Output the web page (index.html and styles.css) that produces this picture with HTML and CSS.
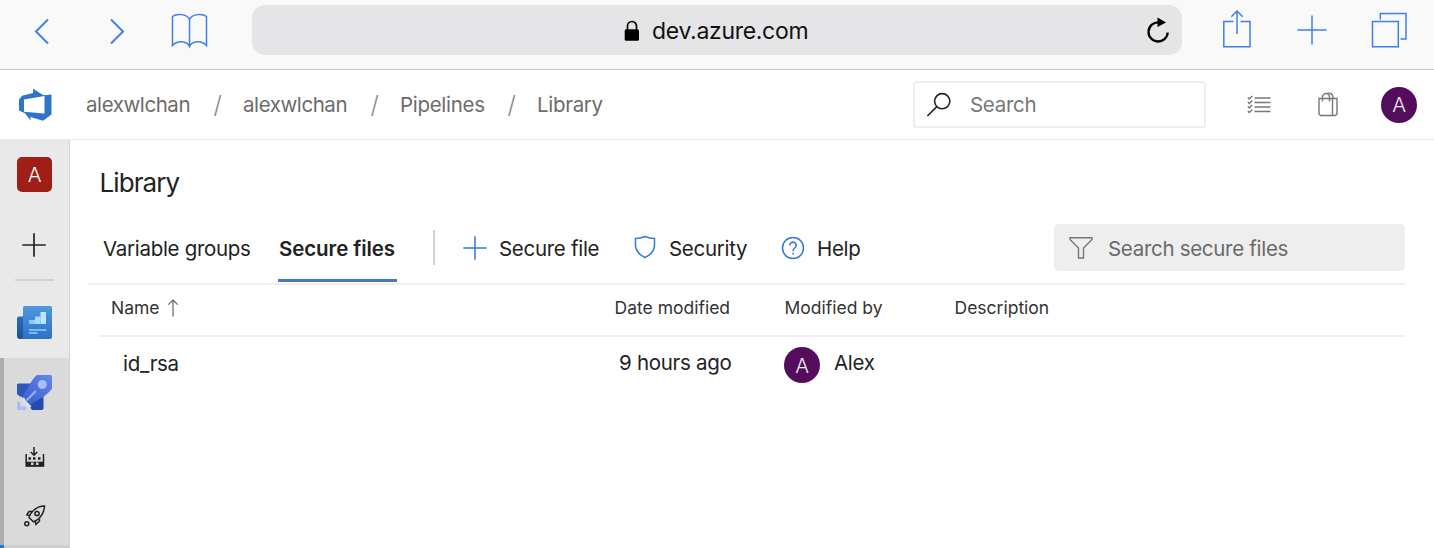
FILE: index.html
```html
<!DOCTYPE html>
<html lang="en">
<head>
<meta charset="utf-8">
<title>Library - Pipelines</title>
<link rel="stylesheet" href="styles.css">
</head>
<body>
<div class="browser">
  <svg class="nav-back" width="16" height="28" viewBox="0 0 16 28"><path d="M14 2.500 2 14.500 14 26.500" /></svg>
  <svg class="nav-forward" width="16" height="28" viewBox="0 0 16 28"><path d="M2 2.500 14 14.500 2 26.500" /></svg>
  <svg class="nav-book" width="38" height="38" viewBox="0 0 38 38"><path d="M18.500 7.500C16 1.500 5 1.500 1.500 4.500V33.500C6 28 16 28.500 18.500 34.500 21 28.500 31 28 35.500 33.500V4.500C32 1.500 21 1.500 18.500 7.500V35.500" /></svg>
  <div class="address">
    <svg class="lock" width="16" height="22" viewBox="0 0 16 22"><path d="M3.500 10V6a4.500 4.500 0 0 1 9 0v4" fill="none" stroke="#000" stroke-width="1.700"/><rect x=".7" y="9.300" width="14.300" height="11.500" rx="1.500"/></svg>
    <span class="url">dev.azure.com</span>
    <svg class="reload" width="24" height="28" viewBox="0 0 24 28"><path d="M12.500 5.300a9.600 9.600 0 1 0 9.200 10.200" fill="none" stroke="#000" stroke-width="2.300"/><path d="M11.500 .5 20 5.500 11.500 10z"/></svg>
  </div>
  <svg class="nav-share" width="30" height="40" viewBox="0 0 30 40"><path d="M11.500 13.500H1.800V38.800H28V13.500H18.500M15 26V3M9.300 8.700 15 3l5.700 5.700" /></svg>
  <svg class="nav-add" width="30" height="30" viewBox="0 0 30 30"><path d="M15 .5v29M.5 15h29" /></svg>
  <svg class="nav-tabs" width="36" height="36" viewBox="0 0 36 36"><path d="M1.500 9.500h25.800v25.200H1.500zM9.300 7.500V1.500H35V27h-5.500" /></svg>
</div>

<header class="header">
  <svg class="logo" width="34" height="34" viewBox="0 0 34 34"><path fill="#2f74cc" fill-rule="evenodd" d="M1 11.500 4 7.800 15 5V.8L25.500 7.300 33.500 6.500V26.500L25 32.800 12.500 29V32.500L7 25.300 1 22.500zM6 11.500V23.800L26.500 25.500V8z"/></svg>
  <nav class="crumbs">
    <span class="crumb crumb-org">alexwlchan</span><span class="slash">/</span>
    <span class="crumb crumb-project">alexwlchan</span><span class="slash">/</span>
    <span class="crumb crumb-area">Pipelines</span><span class="slash">/</span>
    <span class="crumb crumb-page">Library</span>
  </nav>
  <div class="search">
    <svg width="26" height="26" viewBox="0 0 26 26"><g fill="none" stroke="#222" stroke-width="1.600"><circle cx="16.200" cy="9.200" r="7.600"/><path d="M10.800 14.600 1.400 24"/></g></svg>
    <span class="search-text">Search</span>
  </div>
  <svg class="tasks" width="24" height="20" viewBox="0 0 24 20"><g fill="none" stroke="#777" stroke-width="1.500"><path d="M7.500 3h16M7.500 7.500h16M7.500 12h16M7.500 16.500h16"/><path stroke-width="1.300" d="m.8 2.500 1.500 1.500L5.300 1M.8 7l1.500 1.500 3-3M.8 11.500 2.300 13l3-3M.8 16l1.500 1.500 3-3"/></g></svg>
  <svg class="bag" width="20" height="25" viewBox="0 0 20 25"><g fill="none" stroke="#777" stroke-width="1.400"><path d="M1 6.500h18v15.500l-1.500 1.500H2.500L1 22zM14.500 6.500v17M4.500 9.500V5a3.500 3.500 0 0 1 7 0v4.500M8.500 1.700Q10 1 11.500 1.200 15 1.500 15.200 6.500"/></g></svg>
  <span class="avatar avatar-header">A</span>
</header>

<div class="body">
  <aside class="sidebar">
    <span class="tile">A</span>
    <svg class="side-add" width="24" height="24" viewBox="0 0 24 24"><path d="M12 .3v23.400M.3 12h23.400" stroke="#222" stroke-width="1.700"/></svg>
    <div class="side-rule"></div>
    <svg class="boards" width="36" height="34" viewBox="0 0 36 34">
      <defs>
        <linearGradient id="board" x2="0" y2="1"><stop stop-color="#4d99df"/><stop offset="1" stop-color="#2e70c9"/></linearGradient>
        <linearGradient id="fold" x2="0" y2="1"><stop stop-color="#2a6db8"/><stop offset="1" stop-color="#1e5093"/></linearGradient>
      </defs>
      <path fill="url(#fold)" d="M1.500 10.500H7V33H3a3 3 0 0 1-3-3V12z"/>
      <path fill="url(#board)" d="M7.500 0H33.500A1.500 1.500 0 0 1 35 1.500V31a2 2 0 0 1-2 2H4c1.500-.5 2-1.500 2-3V1.500A1.500 1.500 0 0 1 7.500 0z"/>
      <path fill="#8ccaf7" d="M12 14h6v4h-6z"/><path fill="#a6daff" d="M18 10.500h5.500V18H18z"/><path fill="#c1e7ff" d="M23.500 6H29v12h-5.500z"/>
      <path fill="#7cb8ef" d="M12 23h17.500v2H12zM12 26h8.500v2H12z"/>
    </svg>
    <div class="section">
      <svg class="pipelines" width="36" height="36" viewBox="0 0 36 36">
        <defs><linearGradient id="hull" x1="1" x2="0" y2="1"><stop stop-color="#6389e9"/><stop offset="1" stop-color="#365bcd"/></linearGradient></defs>
        <path fill="#3157bd" d="M0 10Q0 8.500 1.500 8.500H15L6 24 0 19z"/>
        <path fill="#2748b3" d="M12 28 26.500 19V33.500L25 35H15L12 31z"/>
        <path fill="url(#hull)" d="M20 0H33.500Q35 0 35 1.500V13.500Q33 17 26 22L12.500 30 5 22.500 13.500 8Q17 2 20 0z"/>
        <circle cx="25.300" cy="9.500" r="4.500" fill="#a7bef8"/>
        <path d="M9.500 25.500 19 15.800" stroke="#8ba8f2" stroke-width="2.500"/>
        <path d="M2.500 23 13 33" stroke="#dadada" stroke-width="4.500"/>
        <path fill="#a9bef5" d="M0 26.500H3.500V31.500H9V35H1.500Q0 35 0 33.500z"/>
        <path fill="#dce2f2" d="M5 24.500 7 22l2.500 5.500L12.500 30 10 31.500 8 27.500z"/>
      </svg>
      <svg class="builds" width="20" height="20" viewBox="0 0 20 20"><g fill="none" stroke="#222"><path stroke-width="1.500" d="M1.200 7v12h17.300V7M9 0v8M5.800 5 9 8.200 12.200 5"/><path stroke-width="4.600" d="M1 17h18"/></g><path fill="#222" d="M3.500 10.300H6v2.500H3.500zM8 10.300h2.500v2.500H8zM13 10.300h2.500v2.500H13z"/><path fill="#dadada" d="M6 15.500h2.500V18H6zM11 15.500h2.500V18H11z"/></svg>
      <svg class="releases" width="22" height="22" viewBox="0 0 22 22"><g fill="none" stroke="#222" stroke-width="1.500"><path d="M20.500 1Q12 1 6.500 9L5 12.500 9.500 16.800 13 15Q20 10 20.500 1zM9 6.500H5L2.800 9.800 6 10.700M15.500 12.500V16L12 19.300 11 16"/><circle cx="13" cy="8.500" r="2.100"/><circle cx="2.800" cy="18.800" r="2"/></g></svg>
      <div class="next-item"></div>
    </div>
  </aside>

  <main class="main">
    <h1 class="title">Library</h1>
    <div class="toolbar">
      <div class="tab tab-groups"><span>Variable groups</span></div>
      <div class="tab tab-files"><span>Secure files</span></div>
      <div class="divider"></div>
      <svg class="cmd-icon cmd-add" width="24" height="24" viewBox="0 0 24 24"><path d="M12 .3v23.400M.3 12h23.400"/></svg>
      <span class="cmd cmd-file">Secure file</span>
      <svg class="cmd-icon cmd-shield" width="22" height="24" viewBox="0 0 22 24"><path d="M11 1.500Q15.500 3.500 20.500 3.500V10.500C20.500 16 17 19.500 11 22.500 5 19.500 1.500 16 1.500 10.500V3.500Q6.500 3.500 11 1.500z"/></svg>
      <span class="cmd cmd-security">Security</span>
      <svg class="cmd-icon cmd-question" width="24" height="24" viewBox="0 0 24 24"><circle cx="12" cy="12" r="10.500"/><path d="M8.800 9.500a3.200 3.200 0 1 1 5 2.500C12.500 13 12 13.500 12 15.300M12 16.800v1.700"/></svg>
      <span class="cmd cmd-help">Help</span>
      <div class="filter">
        <svg width="24" height="24" viewBox="0 0 24 24"><path d="M1 1.700H23V3.500L14.500 12V22H9.500V12L1 3.500z" fill="none" stroke="#777" stroke-width="1.400"/></svg>
        <span class="filter-text">Search secure files</span>
      </div>
    </div>
    <div class="table">
      <div class="row row-head">
        <span class="cell-name"><span class="h-name">Name</span><svg width="12" height="19" viewBox="0 0 12 19"><path d="M6 18.500V2M1.300 6.700 6 2l4.700 4.700" fill="none" stroke="#666" stroke-width="1.200"/></svg></span>
        <span class="h-date">Date modified</span>
        <span class="h-by">Modified by</span>
        <span class="h-desc">Description</span>
      </div>
      <div class="row row-item">
        <span class="cell-file">id_rsa</span>
        <span class="cell-date">9 hours ago</span>
        <span class="avatar">A</span>
        <span class="cell-user">Alex</span>
      </div>
    </div>
  </main>
</div>
</body>
</html>
```
FILE: styles.css
```css
* { box-sizing: border-box; }
body {
  margin: 0;
  height: 548px;
  overflow: hidden;
  display: flex;
  flex-direction: column;
  background: #fff;
  color: #222;
  font-family: Inter, "Liberation Sans", sans-serif;
  font-size: 20.5px;
  letter-spacing: -0.3px;
  white-space: nowrap;
}
svg { display: block; flex: none; }
span { flex: none; }

.browser {
  height: 70px;
  flex: none;
  display: flex;
  align-items: flex-start;
  background: #f9f9f9;
  border-bottom: 1px solid #c9c9cb;
}
.browser > svg { fill: none; stroke: #3f7fe8; stroke-width: 1.5; }
.browser > .nav-back, .browser > .nav-forward { stroke-width: 2; }
.nav-back { margin: 17px 0 0 34px; }
.nav-forward { margin: 17px 0 0 59px; }
.nav-book { margin: 12px 0 0 46px; }
.address {
  width: 930px;
  height: 50px;
  margin: 5px 0 0 43px;
  padding: 1px 0 0 372px;
  flex: none;
  display: flex;
  align-items: center;
  border-radius: 13px;
  background: #e5e5e8;
  color: #111;
}
.lock { margin-right: 12px; }
.url { width: 156px; font-size: 23px; }
.reload { margin-left: 338px; }
.nav-share { margin: 8px 0 0 40px; }
.nav-add { margin: 15px 0 0 45px; }
.nav-tabs { margin: 12px 0 0 44px; }

.header {
  height: 70px;
  flex: none;
  display: flex;
  align-items: center;
  border-bottom: 1px solid #eaeaea;
}
.logo { margin-left: 18px; }
.crumbs {
  width: 827px;
  margin-left: 34px;
  display: flex;
  align-items: center;
  color: #6c6c6c;
}
.crumb-org, .crumb-project { width: 105px; letter-spacing: -0.42px; }
.crumb-area { width: 85px; }
.slash { width: 52px; padding-left: 1px; text-align: center; font-size: 24px; font-weight: 300; color: #888; }
.search {
  width: 293px;
  height: 47px;
  display: flex;
  align-items: center;
  padding-left: 11px;
  border: 2px solid #eee;
  border-radius: 3px;
}
.search-text { margin-left: 18px; color: #777; }
.tasks { margin-left: 41px; }
.bag { margin-left: 47px; }
.avatar {
  width: 36px;
  height: 36px;
  border-radius: 50%;
  display: flex;
  align-items: center;
  justify-content: center;
  background: #540c5c;
  color: #f3e8f4;
  font-weight: 300;
}
.avatar-header { margin-left: 43px; }

.body { flex: 1; min-height: 0; display: flex; }
.sidebar {
  width: 70px;
  flex: none;
  display: flex;
  flex-direction: column;
  background: #e9e9e9;
  border-right: 1px solid #d5d5d5;
}
.tile {
  width: 35px;
  height: 35px;
  margin: 17px 0 0 17px;
  display: flex;
  align-items: center;
  justify-content: center;
  border-radius: 5px;
  background: #9f1f16;
  color: #fff;
  font-weight: 300;
}
.side-add { margin: 41px 0 0 22px; }
.side-rule { width: 39px; height: 2px; margin: 22px 0 0 15px; background: #d2d2d2; }
.boards { margin: 25px 0 0 17px; }
.section {
  flex: 1;
  margin-top: 18px;
  border-left: 4px solid #adadad;
  background: #dadada;
  display: flex;
  flex-direction: column;
}
.pipelines { margin: 17px 0 0 13px; }
.builds { margin: 36px 0 0 21px; }
.releases { margin: 38px 0 0 20px; }
.next-item { height: 3px; margin: 18px 0 0 -4px; border-left: 4px solid #2f74cc; background: #cdcdcd; }

.main { flex: 1; display: flex; flex-direction: column; padding-right: 29px; }
.title { margin: 27px 0 0 29.5px; font-size: 26px; line-height: 32px; font-weight: 400; letter-spacing: -0.9px; }
.toolbar {
  height: 86px;
  margin-left: 18px;
  padding-top: 25px;
  display: flex;
  align-items: flex-start;
  border-bottom: 2px solid #efefef;
}
.tab { height: 58px; line-height: 50px; }
.tab-groups { width: 148px; margin-left: 14px; padding-left: 1px; }
.tab-files { width: 119px; margin-left: 28px; padding-left: 1px; border-bottom: 3px solid #3f7ac6; font-weight: 600; letter-spacing: -0.1px; }
.divider { width: 2px; height: 35px; margin: 6px 0 0 36px; background: #d3d3d3; }
.cmd-icon { fill: none; stroke: #3478d4; stroke-width: 1.5; margin-top: 12px; }
.cmd { line-height: 50px; }
.cmd-add { margin-left: 28px; }
.cmd-file { width: 100px; margin-left: 12px; }
.cmd-shield { margin-left: 35px; margin-top: 11px; }
.cmd-security { width: 78px; margin-left: 13px; }
.cmd-question { margin-left: 34px; }
.cmd-help { width: 44px; margin-left: 12px; }
.filter {
  width: 351px;
  height: 47px;
  margin-left: auto;
  padding: 1px 0 0 15px;
  display: flex;
  align-items: center;
  border-radius: 5px;
  background: #eee;
  color: #6a6a6a;
}
.filter-text { margin-left: 15px; }

.table { margin-left: 29px; display: flex; flex-direction: column; }
.row { display: flex; align-items: center; }
.row-head { height: 52px; padding-bottom: 5px; border-bottom: 2px solid #efefef; font-size: 17.5px; color: #333; letter-spacing: 0; }
.cell-name { width: 515.5px; padding-left: 12px; display: flex; align-items: center; }
.h-name { width: 56px; }
.h-date { width: 170px; }
.h-by { width: 170px; }
.row-item { height: 54px; }
.cell-file { width: 496px; margin-left: 24px; padding-bottom: 2px; }
.cell-date { width: 113px; padding-bottom: 3px; }
.row-item .avatar { margin: 2px 0 0 52px; }
.cell-user { margin-left: 14px; padding-bottom: 3px; }
```
